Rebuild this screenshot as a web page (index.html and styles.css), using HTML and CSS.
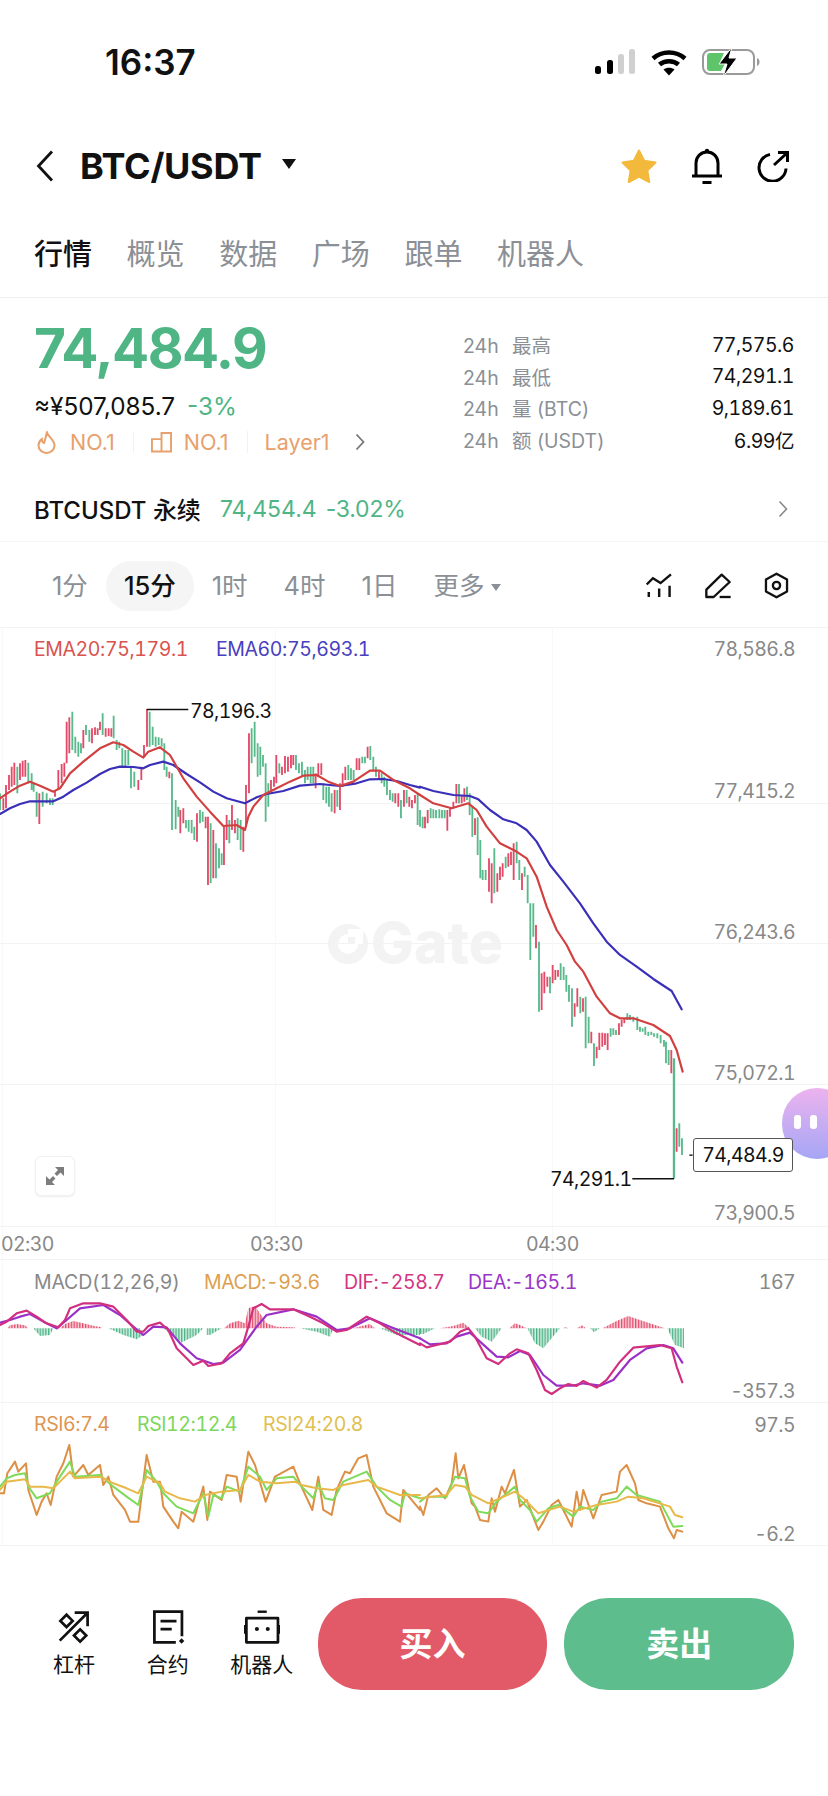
FILE: index.html
```html
<!DOCTYPE html>
<html lang="zh">
<head>
    <meta charset="UTF-8">
    <title>BTC/USDT</title>
    <link rel="stylesheet" href="styles.css">
</head>
<body>
<div class="page">
    <!-- status bar -->
    <div class="status">
        <span class="time">16:37</span>
        <div class="status-icons">
            <svg width="41" height="26" viewBox="0 0 41 26">
                <rect x="0" y="17" width="6" height="8" rx="2.5" fill="#000"/>
                <rect x="12" y="11" width="6" height="14" rx="2.5" fill="#000"/>
                <rect x="23" y="5" width="6" height="20" rx="2.5" fill="#d0d0d0"/>
                <rect x="34" y="0" width="6" height="25" rx="2.5" fill="#d0d0d0"/>
            </svg>
            <svg width="36" height="27" viewBox="0 0 36 27">
                <path d="M2 9.5C11 1.5 25 1.5 34 9.5" fill="none" stroke="#000" stroke-width="4.5"/>
                <path d="M8.5 15.5C13.5 11 22.5 11 27.5 15.5" fill="none" stroke="#000" stroke-width="4.5"/>
                <path d="M18 26.5L12.5 20.5C15.5 18 20.5 18 23.5 20.5Z" fill="#000"/>
            </svg>
            <svg width="58" height="30" viewBox="0 0 58 30">
                <rect x="1" y="3" width="51" height="24" rx="7" fill="#fff" stroke="#9a9a9a" stroke-width="2"/>
                <path d="M5 9a3 3 0 0 1 3-3H22L18 15H24L19 24H8a3 3 0 0 1-3-3Z" fill="#5fc46a"/>
                <path d="M55 11v8c1.5-.5 2.5-2 2.5-4s-1-3.5-2.5-4z" fill="#9a9a9a"/>
                <path d="M30 0L17 17H25L21 30L35 11H27Z" fill="#000" stroke="#fff" stroke-width="1"/>
            </svg>
        </div>
    </div>

    <!-- nav -->
    <div class="nav">
        <svg class="back" width="18" height="32" viewBox="0 0 18 32">
            <path d="M16 1.5L2.5 16L16 30.5" fill="none" stroke="#111" stroke-width="2.8"/>
        </svg>
        <span class="pair">BTC/USDT</span>
        <span class="caret"></span>
        <div class="nav-icons">
            <svg width="36" height="35" viewBox="0 0 36 35">
                <path d="M18 1.5L23.2 11.8L34.5 13.5L26.3 21.5L28.3 33L18 27.6L7.7 33L9.7 21.5L1.5 13.5L12.8 11.8Z" fill="#f3b93c" stroke="#f3b93c" stroke-width="2" stroke-linejoin="round"/>
            </svg>
            <svg width="32" height="36" viewBox="0 0 32 36">
                <path d="M5 27V15C5 8.5 10 4 16 4S27 8.5 27 15V27" fill="none" stroke="#000" stroke-width="3"/>
                <path d="M1 28H31" stroke="#000" stroke-width="3"/>
                <path d="M11.5 34.5H20.5" stroke="#000" stroke-width="3"/>
                <circle cx="16" cy="3" r="2.2" fill="#000"/>
            </svg>
            <svg width="32" height="32" viewBox="0 0 32 32">
                <path d="M13 4.5A13.5 13.5 0 1 0 29 18.5" fill="none" stroke="#000" stroke-width="3"/>
                <path d="M17 15L29.5 3.5M21 2.5H30.5V12" fill="none" stroke="#000" stroke-width="3"/>
            </svg>
        </div>
    </div>

    <!-- tabs -->
    <div class="tabs">
        <span class="tab active">行情</span>
        <span class="tab">概览</span>
        <span class="tab">数据</span>
        <span class="tab">广场</span>
        <span class="tab">跟单</span>
        <span class="tab">机器人</span>
    </div>

    <!-- price and 24h stats -->
    <div class="quote">
        <div class="quote-left">
            <div class="price">74,484.9</div>
            <div class="fiat">≈¥507,085.7<span class="change">-3%</span></div>
            <div class="rank">
                <svg width="19" height="23" viewBox="0 0 19 23">
                    <path d="M10 1.5C11 6 17.5 8.5 17.5 14.5A8 7.5 0 0 1 1.5 14.5C1.5 11.5 3 9.5 4.8 8C5 10 5.5 11.5 7 12C8.5 9 8.5 5 10 1.5Z" fill="none" stroke="#e8a06c" stroke-width="2"/>
                </svg>
                <span class="rank-text first">NO.1</span>
                <i class="rank-sep"></i>
                <svg width="21" height="22" viewBox="0 0 22 22">
                    <path d="M1 8H11V21H1ZM11 1.5H21V21H11Z" fill="none" stroke="#e8a06c" stroke-width="2"/>
                </svg>
                <span class="rank-text">NO.1</span>
                <i class="rank-sep"></i>
                <span class="rank-text layer">Layer1</span>
                <svg class="rank-more" width="10" height="18" viewBox="0 0 10 18">
                    <path d="M1.5 1.5L8.5 9L1.5 16.5" fill="none" stroke="#777" stroke-width="1.8"/>
                </svg>
            </div>
        </div>
        <div class="stats">
            <div class="stat"><span class="stat-name"><b>24h</b>最高</span><span class="stat-val">77,575.6</span></div>
            <div class="stat"><span class="stat-name"><b>24h</b>最低</span><span class="stat-val">74,291.1</span></div>
            <div class="stat"><span class="stat-name"><b>24h</b>量 (BTC)</span><span class="stat-val">9,189.61</span></div>
            <div class="stat"><span class="stat-name"><b>24h</b>额 (USDT)</span><span class="stat-val">6.99亿</span></div>
        </div>
    </div>

    <div class="perp">
        <span class="perp-name">BTCUSDT 永续</span>
        <span class="perp-price">74,454.4</span>
        <span class="perp-change">-3.02%</span>
        <svg class="perp-more" width="10" height="18" viewBox="0 0 10 18">
            <path d="M1.5 1.5L8.5 9L1.5 16.5" fill="none" stroke="#888" stroke-width="1.6"/>
        </svg>
    </div>

    <!-- timeframes -->
    <div class="periods">
        <span class="period p-first">1分</span>
        <span class="period current">15分</span>
        <span class="period">1时</span>
        <span class="period">4时</span>
        <span class="period">1日</span>
        <span class="period more">更多<i class="more-caret"></i></span>
        <div class="chart-tools">
            <svg width="26" height="25" viewBox="20 24 75 70">
                <path d="M22 56L40 38L62 52L92 27" fill="none" stroke="#111" stroke-width="7"/>
                <path d="M28 78V92M58 68V92M88 60V92" fill="none" stroke="#111" stroke-width="7"/>
            </svg>
            <svg width="26" height="26" viewBox="196 20 78 78">
                <path d="M200 92V70L246 25L270 47L222 92Z" fill="none" stroke="#111" stroke-width="7" stroke-linejoin="round"/>
                <path d="M240 92H273" stroke="#111" stroke-width="7"/>
            </svg>
            <svg width="25" height="27" viewBox="374 20 74 82">
                <path d="M411 25L443 43V79L411 97L379 79V43Z" fill="none" stroke="#111" stroke-width="7" stroke-linejoin="round"/>
                <circle cx="411" cy="61" r="11" fill="none" stroke="#111" stroke-width="7"/>
            </svg>
        </div>
    </div>

    <!-- chart: one canvas, coordinates are page pixels -->
    <div class="chart">
        <svg class="chart-svg" width="828" height="919" viewBox="0 627 828 919">
            <defs>
                <pattern id="hist-red" width="2.83" height="10" patternUnits="userSpaceOnUse">
                    <rect width="2.83" height="10" fill="#f9d3da"/>
                    <rect width="1.3" height="10" fill="#e2496a"/>
                </pattern>
                <pattern id="hist-green" width="2.83" height="10" patternUnits="userSpaceOnUse">
                    <rect width="2.83" height="10" fill="#d5eee1"/>
                    <rect width="1.3" height="10" fill="#47b084"/>
                </pattern>
            </defs>

            <path class="grid" d="M0 627.5H828M0 803.5H828M0 943.5H828M0 1084.5H828M0 1226.5H828M0 1259.5H828M0 1402.5H828M0 1545.5H828"/>
            <path class="grid-v" d="M2.5 627V1545M275.5 627V1226M552.5 627V1545"/>

            <circle class="mark-ring" cx="348" cy="944" r="15"/>
            <rect class="mark-cut" x="348" y="929" width="15" height="15"/>
            <rect class="mark-dot" x="348" y="937" width="7" height="7"/>
            <text class="mark" x="371" y="963">Gate</text>

            <!-- candles traced from left half -->
            <g transform="translate(0 620) scale(.3333)">
                <path class="bar-g" d="M0 520V570M52 440V520M85 428V490M95 460V510M101 490V515M110 515V590M128 515V560M140 520V550M150 535V555M158 535V555M217 275V390M226 350V400M235 365V410M243 370V400M258 315V345M268 330V365M308 280V345M341 287V355M350 360V390M358 365V385M367 385V440M376 390V440M385 390V435M393 440V505M403 455V500M449 275V380M458 320V375M467 350V380M476 352V375M485 355V380M493 370V450M500 440V470M516 460V630M527 540V628M535 560V590M558 600V625M566 600V635M575 600V640M583 620V660M600 570V610M608 575V605M632 610V790M648 670V775M657 685V745M665 700V735M688 600V670M713 595V660M722 600V690M755 325V430M764 305V410M773 370V470M781 380V465M789 405V440M797 430V605M805 490V560M838 430V460M888 405V450M897 430V460M906 425V470M915 450V490M923 440V480M932 440V490M940 440V490M970 490V540M979 500V550M987 500V560M995 520V575M1012 510V560M1045 435V480M1053 445V480M1061 450V480M1087 410V430M1095 410V430M1111 378V420M1120 410V450M1128 440V470M1145 460V490M1153 470V500M1161 480V525M1170 510V540M1178 520V545M1203 540V595M1220 510V550M1253 520V615"/>
                <path class="bar-r" d="M10 535V570M18 495V565M27 465V510M35 440V500M43 428V495M60 430V480M68 422V470M76 420V470M118 520V612M165 510V530M175 450V510M185 432V490M193 428V470M200 305V430M208 292V400M250 330V385M276 325V370M285 322V345M293 325V345M300 305V330M317 325V350M326 325V348M334 325V350M415 480V510M424 440V480M432 375V410M441 268V380M508 455V475M541 570V640M550 565V610M591 580V665M617 590V625M624 590V795M640 630V775M672 620V735M680 585V660M696 555V630M705 600V640M730 620V695M738 495V620M747 340V520M813 480V510M822 470V500M829 405V490M846 440V465M855 408V460M864 410V455M873 405V445M880 405V435M947 460V505M955 430V470M964 430V465M1004 510V580M1020 490V570M1028 460V500M1036 440V480M1070 415V450M1078 415V450M1103 380V415M1137 455V480M1186 520V550M1195 520V560M1212 510V560M1228 530V560M1236 540V565M1245 525V550"/>
                <polyline class="ema60" points="0,582 30,565 60,552 90,544 120,544 160,544 190,530 220,510 260,488 300,462 330,447 360,440 400,441 430,445 450,435 490,425 520,435 560,462 600,487 640,515 680,535 735,550 770,532 800,522 850,513 900,497 960,492 1020,498 1070,490 1110,478 1150,477 1190,483 1230,495 1260,503"/>
                <polyline class="ema20" points="0,535 30,515 60,497 90,485 120,497 160,515 180,505 210,460 250,425 300,385 340,367 370,375 400,395 430,413 445,395 480,382 510,405 550,475 590,530 630,575 670,618 710,615 735,630 745,590 760,560 790,525 830,505 870,485 910,467 950,465 985,485 1020,498 1060,485 1110,452 1140,452 1180,480 1230,505 1260,525"/>
                <path class="leader" d="M440 268.5H565"/>
            </g>

            <!-- candles traced from right half -->
            <g transform="translate(420 760) scale(.3333)">
                <path class="bar-g" d="M0 150V200M8 170V205M32 145V175M40 148V175M48 150V175M58 148V175M66 150V175M74 150V175M117 72V130M141 80V120M149 100V165M157 140V230M173 172V285M181 240V355M188 330V360M197 330V360M223 265V400M257 290V325M290 245V310M298 300V360M314 320V350M323 345V430M331 430V600M340 430V530M357 545V755M390 650V700M422 610V660M431 620V660M439 645V695M447 675V725M456 685V800M481 710V760M497 710V865M506 770V850M522 850V918M572 805V830M580 805V825M588 810V825M622 760V780M630 765V780M640 770V785M652 770V810M660 800V815M668 805V815M676 800V825M685 815V828M694 815V825M702 820V830M712 820V835M722 825V850M732 840V860M738 845V910M746 870V915M778 1090V1160M786 1135V1185"/>
                <path class="bar-big" d="M762 895V1256"/>
                <path class="bar-r" d="M15 170V205M23 150V190M82 150V212M90 145V170M100 125V145M109 72V130M125 105V130M133 85V125M165 175V225M207 295V395M215 310V430M232 340V395M240 320V360M248 310V350M265 280V320M273 275V315M281 250V360M306 340V390M348 495V565M365 640V750M373 635V700M382 650V680M398 615V670M406 630V660M414 630V650M464 730V770M472 685V740M489 715V755M514 815V850M530 860V895M538 818V870M547 818V860M555 820V855M563 820V870M597 790V825M605 780V800M613 775V790M754 870V940M770 1105V1175"/>
                <polyline class="ema60" points="0,80 40,93 100,105 150,108 175,118 210,150 250,178 290,190 320,210 350,245 390,315 430,365 480,430 520,490 560,545 600,585 650,620 700,657 755,693 785,748"/>
                <polyline class="ema20" points="0,105 40,130 95,145 145,130 170,150 200,200 240,250 285,272 320,295 350,350 380,440 410,510 440,555 465,605 490,635 530,710 570,760 600,775 640,775 700,795 750,828 770,870 788,935"/>
                <path class="leader" d="M637 1256.5H762"/>
                <path class="leader" d="M808 1185.5H818"/>
            </g>

            <!-- macd and rsi, left then right -->
            <g transform="translate(0 1220) scale(.3333)">
                <path fill="url(#hist-red)" transform="scale(3)" d="M7.3 108.3L10 105.3L16.7 104L25 105.3L28.3 108.3ZM60 108.3L65 104L73.3 101L83.3 103.3L93.3 105.7L101.7 107.3V108.3ZM224 108.3L230 103.3L238.3 100.7L245 103.3L248.3 88.3L255 86L260 93.3L266.7 103.3L276.7 106.7L295 107.3V108.3ZM353.3 108.3L361.7 106L370 104L375 108.3Z"/>
                <path fill="url(#hist-green)" transform="scale(3)" d="M33.3 108.3H53.3L50 115L40 116ZM108.3 108.3H140L143.3 115L136.7 119.3L123.3 115ZM163.3 108.3H203.3L196.7 115L180 123.3L171.7 115ZM206.7 108.3H221.7L210 115H206.7ZM300 108.3H333.3L330 116.7L316.7 111.7ZM380 108.3H420V115L396.7 115Z"/>
                <polyline class="dea" points="0,308 30,300 60,290 90,282 130,305 170,325 200,300 240,265 310,255 360,285 400,320 430,345 460,320 500,322 540,370 590,415 640,432 670,428 720,390 770,320 800,285 880,268 950,290 1010,330 1050,325 1110,295 1170,320 1260,355"/>
                <polyline class="dif" points="0,315 20,305 50,280 80,272 110,290 140,310 175,322 195,300 210,265 250,250 300,250 340,260 380,300 410,335 430,335 445,318 480,308 505,330 530,385 580,435 610,422 625,438 665,430 690,400 730,370 745,320 760,265 785,252 810,268 880,268 930,290 970,310 1010,335 1040,330 1100,290 1140,310 1190,340 1260,375"/>
                <polyline class="rsi-a" points="0,820 12,820 22,760 45,725 55,755 78,730 85,810 110,885 125,845 140,820 152,855 170,770 190,730 208,675 220,770 250,735 265,765 300,735 310,795 325,770 340,825 375,870 390,905 415,905 440,705 460,785 480,785 490,860 520,905 535,925 545,875 580,905 610,800 622,900 630,815 665,840 680,765 710,770 722,845 745,695 765,735 797,845 825,770 880,740 900,790 937,870 955,770 970,870 995,885 1010,810 1035,755 1050,760 1075,715 1100,705 1120,800 1160,880 1200,905 1210,810 1260,870"/>
                <polyline class="rsi-b" points="0,800 20,775 45,765 75,760 85,800 110,835 150,820 170,785 210,725 225,770 300,765 340,800 380,830 415,855 440,750 470,785 490,820 530,860 580,880 610,820 625,890 640,825 665,835 680,800 720,815 745,740 780,770 800,810 830,775 880,770 905,800 940,835 955,790 975,835 1000,840 1030,785 1100,755 1130,800 1170,840 1205,860 1215,820 1260,835"/>
                <polyline class="rsi-c" points="0,810 20,785 75,778 90,800 130,800 160,805 210,755 225,775 300,770 340,790 380,805 415,820 440,770 480,790 495,815 540,835 585,845 615,825 665,815 720,810 745,765 780,785 830,790 885,785 905,795 950,805 1000,810 1030,795 1105,780 1130,800 1200,825 1260,825"/>
            </g>
            <g transform="translate(420 1220) scale(.3333)">
                <path fill="url(#hist-red)" transform="scale(3)" d="M20 108.3L33.3 106L43.3 102.7L50 108.3ZM89.3 108.3L95 103.3L100 105L106.7 108.3ZM143.3 108.3H148.3L145.7 107ZM156.7 108.3H165.7L162.3 105.3ZM182.7 108.3L195 101.7L208.3 96L220 100L245 108.3Z"/>
                <path fill="url(#hist-green)" transform="scale(3)" d="M0 108.3H15L3.3 114H0ZM55 108.3H81.7L71.7 121.7L61.7 116.7ZM107.3 108.3H140L123.3 128.3L115 123.3ZM170 108.3H180L174 112.3ZM247.3 108.3H264V128.3L255 125Z"/>
                <polyline class="dea" points="0,355 30,373 80,370 110,350 150,338 180,365 230,410 265,412 300,393 330,405 370,465 410,497 460,497 490,490 540,497 580,480 630,420 680,385 730,375 760,385 787,428"/>
                <polyline class="dif" points="0,370 20,382 50,375 90,365 120,335 145,325 165,350 200,415 235,432 270,400 290,388 325,400 350,450 375,510 395,522 420,505 445,492 470,498 490,483 530,503 560,480 600,425 640,383 720,375 755,385 770,440 787,487"/>
                <polyline class="rsi-a" points="0,860 10,885 25,825 50,805 75,835 95,790 107,700 115,775 132,735 155,850 165,860 180,900 205,905 215,835 225,875 245,800 255,820 282,750 300,860 320,840 355,930 370,905 395,855 415,840 455,920 470,815 480,870 490,810 520,895 545,825 590,815 600,755 620,735 645,790 655,840 680,850 720,860 745,925 762,955 770,930 787,935"/>
                <polyline class="rsi-b" points="0,845 20,830 80,830 105,770 135,775 150,830 175,875 205,880 230,845 285,800 300,840 330,870 350,905 385,865 415,855 460,890 480,860 520,870 545,845 590,835 620,800 650,825 720,845 760,920 787,918"/>
                <polyline class="rsi-c" points="0,835 80,825 105,795 135,800 155,825 205,850 285,815 310,835 355,880 420,860 460,875 530,855 590,845 625,830 670,835 750,860 765,885 787,892"/>
            </g>

            <!-- legends -->
            <text class="t ema20-t" x="34" y="656">EMA20:75,179.1</text>
            <text class="t ema60-t" x="216" y="656">EMA60:75,693.1</text>
            <text class="t black" x="190" y="718">78,196.3</text>
            <text class="t black" x="550" y="1186">74,291.1</text>

            <text class="t axis" x="795" y="656" text-anchor="end">78,586.8</text>
            <text class="t axis" x="795" y="798" text-anchor="end">77,415.2</text>
            <text class="t axis" x="795" y="939" text-anchor="end">76,243.6</text>
            <text class="t axis" x="795" y="1080" text-anchor="end">75,072.1</text>
            <text class="t axis" x="795" y="1220" text-anchor="end">73,900.5</text>

            <text class="t axis" x="1" y="1251">02:30</text>
            <text class="t axis" x="250" y="1251">03:30</text>
            <text class="t axis" x="526" y="1251">04:30</text>

            <text class="t gray" x="34" y="1289">MACD(12,26,9)</text>
            <text class="t macd-t" x="204" y="1289">MACD:-93.6</text>
            <text class="t dif-t" x="344" y="1289">DIF:-258.7</text>
            <text class="t dea-t" x="468" y="1289">DEA:-165.1</text>
            <text class="t axis" x="795" y="1289" text-anchor="end">167</text>
            <text class="t axis" x="795" y="1398" text-anchor="end">-357.3</text>

            <text class="t rsi-a-t" x="34" y="1431">RSI6:7.4</text>
            <text class="t rsi-b-t" x="137" y="1431">RSI12:12.4</text>
            <text class="t rsi-c-t" x="263" y="1431">RSI24:20.8</text>
            <text class="t axis" x="795" y="1432" text-anchor="end">97.5</text>
            <text class="t axis" x="795" y="1541" text-anchor="end">-6.2</text>
        </svg>

        <div class="last-price">74,484.9</div>
        <div class="expand">
            <svg width="22" height="22" viewBox="0 0 22 22">
                <path d="M2 20V11L5.5 14.5L9 11L11.5 13.5L8 17L11 20ZM20 2V11L16.5 7.5L13 11L10.5 8.5L14 5L11 2Z" fill="#7d7d7d"/>
            </svg>
        </div>
        <div class="assist"><i></i><i></i></div>
    </div>

    <!-- bottom actions -->
    <div class="actions">
        <div class="action">
            <svg width="34" height="34" viewBox="50 30 100 100">
                <path d="M58 120L140 38M102 38H140V78" fill="none" stroke="#111" stroke-width="8"/>
                <path d="M60 62L78 44L96 62L78 80ZM100 105L118 87L136 105L118 123Z" fill="none" stroke="#111" stroke-width="8"/>
            </svg>
            <span>杠杆</span>
        </div>
        <div class="action">
            <svg width="34" height="34" viewBox="331 29 100 100">
                <path d="M422 106V34H341V124H404" fill="none" stroke="#111" stroke-width="8"/>
                <path d="M359 62H406M359 85H392" fill="none" stroke="#111" stroke-width="8"/>
                <path d="M421 112L429 120L421 128L413 120Z" fill="#111"/>
            </svg>
            <span>合约</span>
        </div>
        <div class="action">
            <svg width="36" height="34" viewBox="615 30 106 100">
                <path d="M622 54H715V125H622Z" fill="none" stroke="#111" stroke-width="8" stroke-linejoin="round"/>
                <path d="M655 35H682" stroke="#111" stroke-width="7"/>
                <path d="M618 74V100M719 74V100" stroke="#111" stroke-width="8"/>
                <circle cx="653" cy="86" r="6" fill="#111"/>
                <circle cx="685" cy="86" r="6" fill="#111"/>
            </svg>
            <span>机器人</span>
        </div>
        <div class="btn buy">买入</div>
        <div class="btn sell">卖出</div>
    </div>
</div>
</body>
</html>
```
FILE: styles.css
```css
html, body { margin: 0; padding: 0; background: #fff; }
body { font-family: Inter, "Noto Sans CJK SC", sans-serif; color: #111; }
svg { display: block; flex: none; }
.page { width: 828px; height: 1796px; overflow: hidden; }

.status { height: 124px; display: flex; align-items: center; justify-content: space-between; padding: 0 68px 0 105px; }
.time { font-size: 35px; font-weight: 600; }
.status-icons { display: flex; align-items: center; gap: 15px; }

.nav { height: 84px; display: flex; align-items: center; padding: 0 39px 0 36px; }
.pair { font-size: 36px; font-weight: 700; margin-left: 26px; letter-spacing: -0.3px; }
.caret { width: 0; height: 0; margin-left: 20px; margin-top: -4px; border-left: 7.5px solid transparent; border-right: 7.5px solid transparent; border-top: 10px solid #111; }
.nav-icons { margin-left: auto; display: flex; align-items: center; gap: 34px; }

.tabs { height: 90px; display: flex; align-items: center; gap: 34.6px; padding: 0 0 2px 34px; border-bottom: 1px solid #eee; box-sizing: border-box; }
.tab { font-size: 29px; color: #8b9096; }
.tab.active { color: #111; font-weight: 500; }

.quote { height: 180px; display: flex; justify-content: space-between; padding: 0 34px 0 34px; box-sizing: border-box; }
.price { font-size: 55px; font-weight: 700; color: #4fb585; line-height: 68px; margin-top: 16px; letter-spacing: -1.5px; }
.fiat { font-size: 24.3px; line-height: 28px; margin-top: 10px; }
.change { color: #4fb585; margin-left: 12px; }
.rank { display: flex; align-items: center; height: 24px; margin-top: 10px; padding-left: 3px; color: #e8a06c; font-size: 21.5px; }
.rank-text { margin-left: 12px; }
.rank-text.first { margin-left: 14px; }
.rank-text.layer { margin-left: 0; }
.rank-sep { width: 1px; height: 22px; background: #f2f2f2; margin: 0 17px 0 18px; }
.rank-more { margin-left: 25px; }

.stats { width: 331px; padding-top: 31px; }
.stat { height: 31.5px; display: flex; align-items: center; justify-content: space-between; font-size: 20px; }
.stat-name { color: #8b9096; font-size: 19.5px; }
.stat-name b { font-weight: 400; display: inline-block; width: 49px; }
.stat-val { font-variant-numeric: tabular-nums; font-size: 19.5px; letter-spacing: -0.5px; }

.perp { height: 64px; display: flex; align-items: center; padding: 0 40px 2px 34px; border-bottom: 1px solid #f5f5f5; font-size: 23px; box-sizing: border-box; }
.perp-price, .perp-change { color: #4fb585; }
.perp-name { font-size: 24px; font-weight: 500; }
.perp-price { margin-left: 19px; }
.perp-change { margin-left: 9px; letter-spacing: -0.2px; }
.perp-more { margin-left: auto; }

.periods { height: 85px; display: flex; align-items: center; padding: 2px 39px 0 34px; box-sizing: border-box; }
.period { font-size: 25.5px; color: #8b9096; padding: 0 18px; height: 50px; line-height: 50px; border-radius: 25px; }
.period.current { background: #f5f5f5; color: #111; font-weight: 500; }
.more-caret { display: inline-block; width: 0; height: 0; margin-left: 7px; vertical-align: 4px; border-left: 5px solid transparent; border-right: 5px solid transparent; border-top: 7px solid #8b9096; }
.chart-tools { margin-left: auto; display: flex; align-items: center; gap: 33px; }

.chart { position: relative; height: 918px; }
.chart-svg { position: absolute; left: 0; top: 0; }
.grid { fill: none; stroke: #f3f3f3; stroke-width: 1; }
.grid-v { fill: none; stroke: #f8f8f8; stroke-width: 1; }
.t { font-size: 19.5px; font-family: Inter, sans-serif; font-variant-numeric: tabular-nums; letter-spacing: -0.4px; }
.black { fill: #111; letter-spacing: -0.6px; }
.axis { fill: #888; letter-spacing: -0.6px; }
.gray { fill: #888; letter-spacing: -0.15px; }
.ema20-t { fill: #d9534f; }
.ema60-t { fill: #4a3fc0; }
.macd-t { fill: #dd9f4f; }
.dif-t { fill: #d4357f; }
.dea-t { fill: #9a35c8; }
.rsi-a-t { fill: #dd9553; }
.rsi-b-t { fill: #7ed65a; }
.rsi-c-t { fill: #e0c050; }

.mark { font-size: 57px; font-weight: 800; fill: #f3f3f3; font-family: Inter, sans-serif; }
.mark-ring { fill: none; stroke: #f3f3f3; stroke-width: 10; }
.mark-cut { fill: #fff; }
.mark-dot { fill: #f3f3f3; }

.bar-g, .bar-r, .bar-big { fill: none; stroke-width: 5.5; }
.bar-g { stroke: #58b98b; }
.bar-r { stroke: #e24a68; }
.bar-big { stroke: #58b98b; stroke-width: 7; }
.leader { fill: none; stroke: #111; stroke-width: 4; }
polyline { fill: none; stroke-linejoin: round; stroke-linecap: round; }
.ema20 { stroke: #d23f3f; stroke-width: 6.5; }
.ema60 { stroke: #3a2fb8; stroke-width: 6.5; }
.dif { stroke: #d22f7f; stroke-width: 6.5; }
.dea { stroke: #9a30c8; stroke-width: 6.5; }
.rsi-a { stroke: #dd8f45; stroke-width: 6; }
.rsi-b { stroke: #7edb5a; stroke-width: 6; }
.rsi-c { stroke: #e8b84a; stroke-width: 6; }

.last-price { position: absolute; left: 693px; top: 511px; width: 100px; height: 34px; box-sizing: border-box; border: 1px solid #555; border-radius: 3px; background: #fff; font-size: 19.5px; line-height: 32px; text-align: center; color: #111; z-index: 2; font-variant-numeric: tabular-nums; letter-spacing: -0.6px; }
.expand { position: absolute; left: 35px; top: 529px; width: 40px; height: 40px; box-sizing: border-box; border: 1px solid #f1f1f1; border-radius: 6px; background: #fff; box-shadow: 0 1px 2px #eee; display: flex; align-items: center; justify-content: center; }
.assist { position: absolute; left: 782px; top: 461px; width: 70px; height: 71px; border-radius: 35px; background: linear-gradient(#ecb3ee, #a5a6f6); display: flex; align-items: center; gap: 9px; padding-left: 12px; box-sizing: border-box; }
.assist i { width: 7px; height: 14px; border-radius: 3px; background: #fff; margin-top: -4px; }

.actions { display: flex; align-items: flex-start; padding: 53px 34px 0 27px; }
.action { width: 94px; display: flex; flex-direction: column; align-items: center; padding-top: 12px; font-size: 21px; color: #111; }
.action span { margin-top: 8px; line-height: 26px; }
.btn { width: 230px; height: 92px; border-radius: 44px; color: #fff; font-size: 33px; font-weight: 700; line-height: 92px; text-align: center; }
.buy { background: #e25a68; margin-left: 9px; }
.sell { background: #5dbd8c; margin-left: 17px; }
```
